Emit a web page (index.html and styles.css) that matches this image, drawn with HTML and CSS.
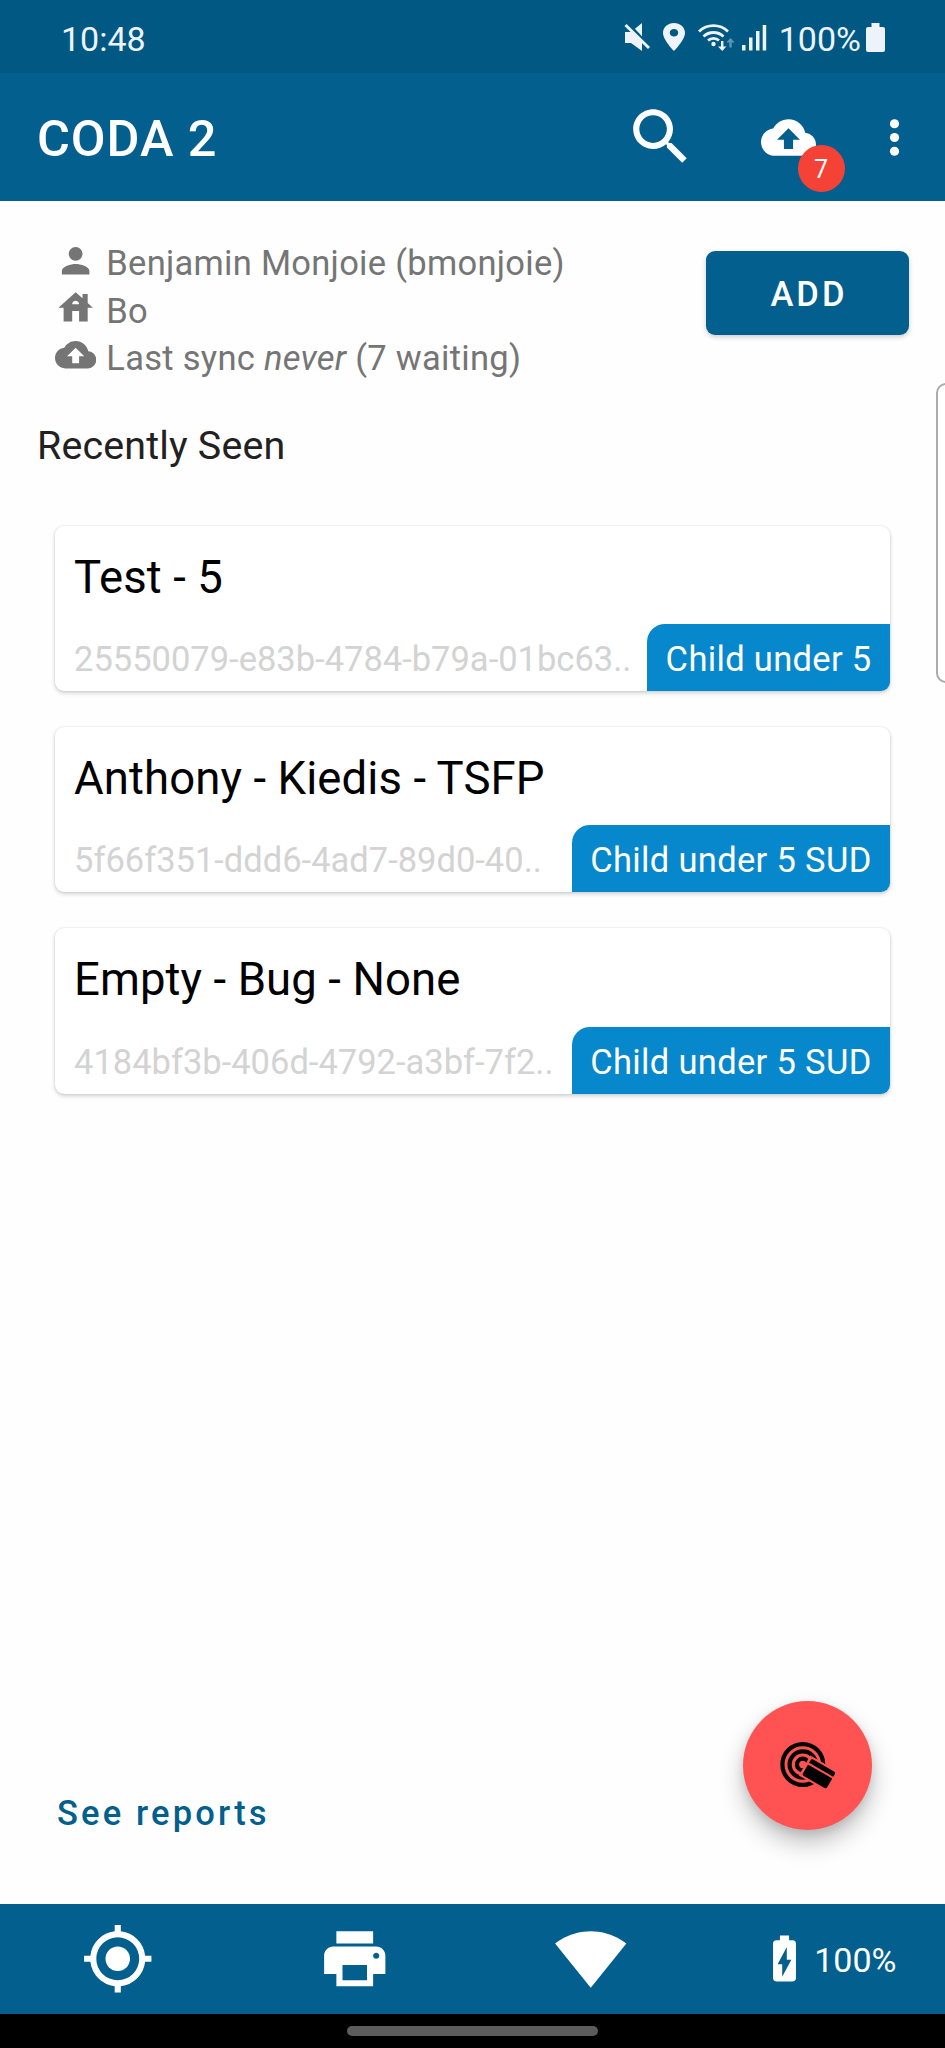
FILE: index.html
```html
<!DOCTYPE html>
<html lang="en">
<head>
<meta charset="utf-8">
<title>CODA 2</title>
<link rel="stylesheet" href="styles.css">
</head>
<body>
<div class="screen">
  <div class="status">
    <span class="clock">10:48</span>
    <div class="status-icons">
      <svg class="i-mute" viewBox="0 0 26 28" width="26" height="28"><path d="M1 9h6l11-9v28l-11-8H1z"/><path class="cut" d="M1 -2L27 26"/><path class="slash" d="M1.500 2L25 25"/></svg>
      <svg class="i-pin" viewBox="5 2 14 20" width="22" height="28" preserveAspectRatio="none"><path d="M12 2C8.130 2 5 5.130 5 9c0 5.250 7 13 7 13s7-7.750 7-13c0-3.870-3.130-7-7-7zm0 9.700c-1.500 0-2.700-1.200-2.700-2.700s1.200-2.700 2.700-2.700 2.700 1.200 2.700 2.700-1.200 2.700-2.700 2.700z"/></svg>
      <svg class="i-wifi" viewBox="0 0 37 28" width="37" height="28"><g class="arc"><path d="M1 8.500A21 21 0 0 1 30 8.500"/><path d="M5.500 13.500A14.500 14.500 0 0 1 25.500 13.500"/><path d="M10 17.500A8 8 0 0 1 21 17.500"/></g><circle cx="15.500" cy="21" r="2.200"/><path d="M23 18h2.400v5.500h3l-4.200 4.500-4.200-4.500h3z"/><path class="dim" d="M31.300 24.500h2.400v-5h3l-4.200-4.500-4.200 4.500h3z"/></svg>
      <svg class="i-signal" viewBox="0 0 25 28" width="25" height="28"><path d="M0 22h3.500v5.500H0zM7 14.500h3.500v13H7zM14 8h3.500v19.500H14zM20.700 2h3.500v25.500h-3.500z"/></svg>
      <span class="pct">100%</span>
      <svg class="i-batt" viewBox="0 0 19 29" width="19" height="29"><path d="M5.500 0h8v4H17q2 0 2 2v21q0 2-2 2H2q-2 0-2-2V6q0-2 2-2h3.500z"/></svg>
    </div>
  </div>
  <header class="appbar">
    <h1 class="title">CODA 2</h1>
    <svg class="i-search" viewBox="0 0 24 24"><path d="M15.500 14h-.790l-.280-.270C15.410 12.590 16 11.110 16 9.500 16 5.910 13.090 3 9.500 3S3 5.910 3 9.500 5.910 16 9.500 16c1.610 0 3.090-.590 4.230-1.570l.270.280v.790l5 4.990L20.490 19l-4.990-5zm-6 0C7.010 14 5 11.990 5 9.500S7.010 5 9.500 5 14 7.010 14 9.500 11.990 14 9.500 14z"/></svg>
    <div class="sync">
      <svg viewBox="0 0 24 24"><path d="M19.350 10.040C18.670 6.590 15.640 4 12 4 9.110 4 6.600 5.640 5.350 8.040 2.340 8.360 0 10.910 0 14c0 3.310 2.690 6 6 6h13c2.760 0 5-2.240 5-5 0-2.640-2.050-4.780-4.650-4.960zM14 13v4h-4v-4H7l5-5 5 5h-3z"/></svg>
      <span class="badge">7</span>
    </div>
    <svg class="i-more" viewBox="0 0 24 24"><circle cx="12" cy="6" r="2"/><circle cx="12" cy="12" r="2"/><circle cx="12" cy="18" r="2"/></svg>
  </header>
  <main class="content">
    <section class="account">
      <ul class="info">
        <li><svg viewBox="0 0 24 24"><path d="M12 12c2.210 0 4-1.790 4-4s-1.790-4-4-4-4 1.790-4 4 1.790 4 4 4zm0 2c-2.670 0-8 1.340-8 4v2h16v-2c0-2.660-5.330-4-8-4z"/></svg><span>Benjamin Monjoie (bmonjoie)</span></li>
        <li><svg viewBox="0 0 24 24"><path d="M19 9.300V4h-3v2.600L12 3 2 12h3v8h5v-6h4v6h5v-8h3l-3-2.700zm-9 .7c0-1.100.9-2 2-2s2 .9 2 2h-4z"/></svg><span>Bo</span></li>
        <li><svg viewBox="0 0 24 24"><path d="M19.350 10.040C18.670 6.590 15.640 4 12 4 9.110 4 6.600 5.640 5.350 8.040 2.340 8.360 0 10.910 0 14c0 3.310 2.690 6 6 6h13c2.760 0 5-2.240 5-5 0-2.640-2.050-4.780-4.650-4.960zM14 13v4h-4v-4H7l5-5 5 5h-3z"/></svg><span>Last sync <em>never</em> (7 waiting)</span></li>
      </ul>
      <button class="add">ADD</button>
    </section>
    <h2 class="heading">Recently Seen</h2>
    <div class="cards">
      <article class="card">
        <h3>Test - 5</h3>
        <div class="foot"><span class="uid">25550079-e83b-4784-b79a-01bc63..</span><span class="tag">Child under 5</span></div>
      </article>
      <article class="card">
        <h3>Anthony - Kiedis - TSFP</h3>
        <div class="foot"><span class="uid">5f66f351-ddd6-4ad7-89d0-40..</span><span class="tag">Child under 5 SUD</span></div>
      </article>
      <article class="card">
        <h3>Empty - Bug - None</h3>
        <div class="foot"><span class="uid">4184bf3b-406d-4792-a3bf-7f2..</span><span class="tag">Child under 5 SUD</span></div>
      </article>
    </div>
    <div class="actions">
      <a class="reports">See reports</a>
      <button class="fab" aria-label="Scan card">
        <svg viewBox="0 0 56 48" width="56" height="48"><g class="ring"><circle cx="22.800" cy="23.500" r="20.400"/><circle cx="22.800" cy="23.500" r="13.200"/><circle cx="22.800" cy="23.500" r="5.800"/></g><g transform="translate(31.500 17.500) rotate(30)"><rect class="gap" x="-2.500" y="-2" width="40" height="23"/><path d="M2 0h24q2 0 2 2v3H0V2q0-2 2-2zM0 7h28V17q0 2-2 2H2q-2 0-2-2z"/></g></svg>
      </button>
    </div>
  </main>
  <aside class="edge"></aside>
  <nav class="bottom">
    <div class="tab"><svg viewBox="0 0 24 24"><path fill-rule="evenodd" d="M20.940 11A8.994 8.994 0 0 0 13 3.060V1h-2v2.060A8.994 8.994 0 0 0 3.060 11H1v2h2.060A8.994 8.994 0 0 0 11 20.940V23h2v-2.060A8.994 8.994 0 0 0 20.940 13H23v-2h-2.060zM12 19a7 7 0 1 1 0-14 7 7 0 0 1 0 14z"/><circle cx="12" cy="12" r="4"/></svg></div>
    <div class="tab"><svg viewBox="0 0 24 24"><path d="M19 8H5c-1.660 0-3 1.340-3 3v6h4v4h12v-4h4v-6c0-1.660-1.340-3-3-3zm-3 11H8v-5h8v5zm3-7c-.550 0-1-.450-1-1s.450-1 1-1 1 .450 1 1-.450 1-1 1zm-1-9H6v4h12V3z"/></svg></div>
    <div class="tab"><svg viewBox="0 0 24 24"><path d="M12.010 21.490L23.640 7c-.450-.340-4.930-4-11.640-4C5.280 3 .810 6.660.360 7l11.630 14.490.010.010.010-.010z"/></svg></div>
    <div class="tab power"><svg viewBox="0 0 24 24"><path d="M15.670 4H14V2h-4v2H8.330C7.600 4 7 4.600 7 5.330v15.330C7 21.400 7.600 22 8.330 22h7.330c.740 0 1.340-.6 1.340-1.330V5.330C17 4.600 16.400 4 15.670 4zM11 20v-5.500H9L13 7v5.500h2L11 20z"/></svg><span>100%</span></div>
  </nav>
  <div class="gesture"><span class="pill"></span></div>
</div>
</body>
</html>
```
FILE: styles.css
```css
* { box-sizing: border-box; margin: 0; padding: 0; }
body { font-family: Roboto, sans-serif; background: #fefefe; }
svg { display: block; fill: currentColor; flex: none; }
h1, h2, h3 { font-weight: 400; }
button { border: 0; font: inherit; }

.screen { position: relative; width: 945px; height: 2048px; display: flex; flex-direction: column; overflow: hidden; font-size: 34.5px; }

.status { height: 73px; flex: none; background: #005883; color: #edf3f8; display: flex; justify-content: space-between; padding: 0 60px 0 61px; line-height: 79px; font-size: 34px; }
.status-icons { display: flex; align-items: flex-start; }
.status-icons svg { margin-top: 23px; }
.i-pin { margin-left: 13px; }
.i-wifi { margin-left: 13px; }
.i-signal { margin-left: 7px; }
.pct { margin-left: 12px; }
.i-batt { margin-left: 5px; }
.arc { fill: none; stroke: currentColor; stroke-width: 2.800; }
.dim { opacity: .4; }
.cut { stroke: #005883; stroke-width: 4; }
.slash { stroke: currentColor; stroke-width: 3; }

.appbar { height: 128.300px; flex: none; background: #025f8e; color: #fff; display: flex; align-items: center; padding-left: 37px; }
.title { font-size: 50.500px; font-weight: 500; letter-spacing: .9px; flex: 1; padding-top: 3px; }
.i-search { width: 73.500px; height: 73.500px; }
.sync { position: relative; margin-left: 64px; color: #fff; }
.sync svg { width: 55px; height: 55px; }
.badge { position: absolute; left: 36.500px; top: 35.500px; width: 47px; height: 47px; border-radius: 50%; background: #f44336; font-size: 25px; line-height: 49px; text-align: center; }
.i-more { width: 55px; height: 55px; margin: 0 23px 0 51px; }

.content { flex: 1; display: flex; flex-direction: column; padding-top: 38.500px; }
.account { display: flex; justify-content: space-between; align-items: flex-start; padding: 0 36px 0 55px; color: #757575; }
.info { list-style: none; letter-spacing: .28px; }
.info li { display: flex; align-items: center; height: 47.300px; gap: 10px; }
.info svg { width: 41.300px; height: 41.300px; margin-top: -6px; }
.add { width: 203px; height: 84px; margin-top: 11px; padding: 3px 0 0 3px; border-radius: 9px; background: #025f8e; color: #fff; font-weight: 500; letter-spacing: 3.100px; box-shadow: 0 2px 5px rgba(0,0,0,.2); }
.heading { font-size: 39.400px; line-height: 46px; letter-spacing: .17px; color: #212121; margin: 41.200px 0 0 37px; }

.cards { display: flex; flex-direction: column; gap: 36px; margin: 56.800px 55px 0; }
.card { height: 165.300px; border-radius: 9px; background: #fff; overflow: hidden; display: flex; flex-direction: column; justify-content: space-between; box-shadow: 0 0 2px rgba(0,0,0,.12), 0 2px 4px rgba(0,0,0,.18); }
.card h3 { font-size: 45.500px; line-height: 54px; letter-spacing: .1px; padding: 25px 19px 0; color: #000; }
.foot { display: flex; justify-content: space-between; height: 67px; line-height: 71px; padding-left: 19px; white-space: nowrap; }
.uid { color: #d3d3d3; }
.tag { background: #0787cc; color: #fff; padding: 0 18.400px; border-top-left-radius: 18px; letter-spacing: .33px; }

.actions { margin-top: auto; display: flex; justify-content: space-between; align-items: flex-end; padding: 0 73px 74px 57px; }
.reports { color: #025f8e; font-weight: 500; letter-spacing: 3.150px; line-height: 40px; margin-bottom: -3px; }
.fab { width: 129px; height: 129px; border-radius: 50%; background: #ff5353; color: #000; display: flex; align-items: center; justify-content: center; box-shadow: 0 13px 24px rgba(0,0,0,.24), 0 4px 10px rgba(0,0,0,.1); }
.ring { fill: none; stroke: currentColor; stroke-width: 4.200; }
.gap { fill: #ff5353; }

.edge { position: absolute; left: 935.500px; top: 383px; width: 20px; height: 300px; border: 2px solid #ababab; border-radius: 11px; background: #fff; }

.bottom { height: 110.300px; flex: none; background: #025f8e; color: #fff; display: grid; grid-template-columns: repeat(4, 1fr); }
.tab { display: flex; align-items: center; justify-content: center; }
.tab svg { width: 73.500px; height: 73.500px; }
.power svg { width: 55px; height: 55px; }
.power { gap: 2px; font-size: 34px; }
.power span { padding-top: 3px; }
.gesture { height: 34px; flex: none; background: #000; display: flex; justify-content: center; padding-top: 12px; }
.pill { width: 251px; height: 10px; border-radius: 5px; background: #5c5c5c; }
```
